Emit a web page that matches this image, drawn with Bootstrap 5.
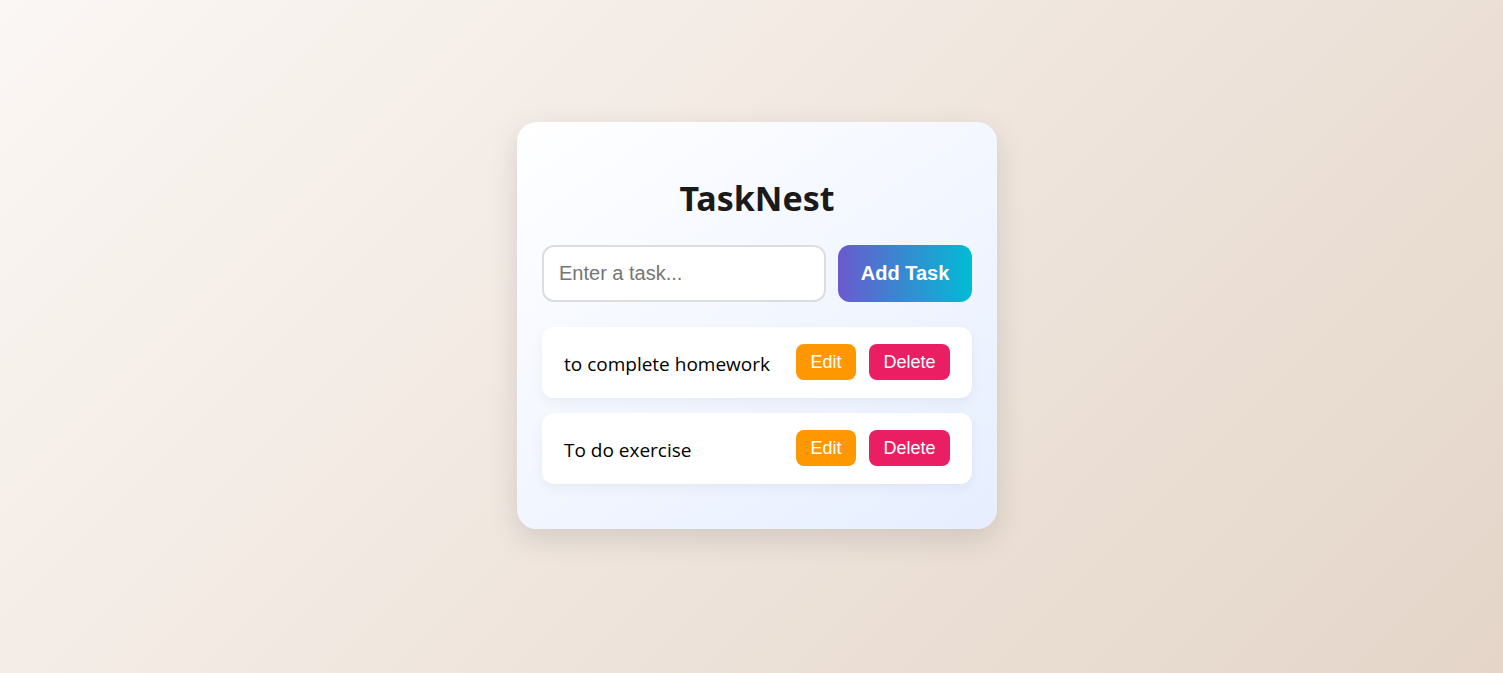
<!DOCTYPE html>
<html lang="en">
<head>
<meta charset="utf-8">
<meta name="viewport" content="width=device-width, initial-scale=1">
<title>TaskNest</title>
<link href="https://cdn.jsdelivr.net/npm/bootstrap@5.3.0/dist/css/bootstrap.min.css" rel="stylesheet">
<style>
  body {
    font-family: "Segoe UI", "Open Sans", "Noto Sans", sans-serif;
    color: #000;
    background: linear-gradient(135deg, #fbf7f4, #e4d5c8) no-repeat;
    padding: 0 0 22px 11px;
  }
  .task-panel {
    max-width: 480px;
    padding: 51px 25px 45px;
    border: 0;
    border-radius: 20px;
    background: linear-gradient(145deg, #fff, #e6eeff);
    box-shadow: 0 10px 30px rgba(0, 0, 0, .12);
  }
  .panel-title {
    margin: 0 0 22px;
    font-family: "Segoe UI", "Noto Sans", sans-serif;
    font-size: 34px;
    line-height: 50px;
    font-weight: 700;
    color: #1a1a1a;
  }
  .add-form { gap: 12px; margin-bottom: 25px; }
  .task-input, .add-btn, .item-btn { font-family: "Liberation Sans", Arial, sans-serif; }
  .task-input {
    min-width: 0;
    height: 57px;
    padding: 0 15px;
    font-size: 20px;
    border: 2px solid #ddd;
    border-radius: 12px;
  }
  .task-input::placeholder { color: #757575; }
  .add-btn {
    width: 134px;
    padding: 0 0 2px;
    font-size: 20px;
    font-weight: 700;
    border: 0;
    border-radius: 12px;
    background: linear-gradient(90deg, #6a5acd, #00bcd4);
  }
  .task-list { gap: 15px; }
  .task-item {
    min-height: 71px;
    padding: 16px 22px 17px;
    gap: 13px;
    border-radius: 12px;
    background: #fff;
    box-shadow: 0 4px 12px rgba(0, 0, 0, .05);
  }
  .task-text { font-size: 19px; line-height: 28px; padding-top: 4px; }
  .item-btn {
    height: 36px;
    padding: 0;
    font-size: 18px;
    line-height: 20px;
    border: 0;
    border-radius: 8px;
  }
  .edit-btn { width: 60px; }
  .delete-btn { width: 81px; }
  .edit-btn, .edit-btn:hover { background: #ff9800; }
  .delete-btn, .delete-btn:hover { background: #e91e63; }
</style>
</head>
<body class="min-vh-100 d-flex justify-content-center align-items-center">
  <main class="task-panel card w-100">
    <h1 class="panel-title text-center">TaskNest</h1>
    <form class="add-form d-flex" onsubmit="return false">
      <input type="text" class="task-input form-control flex-fill" placeholder="Enter a task..." aria-label="Enter a task">
      <button type="submit" class="add-btn btn text-white text-nowrap flex-shrink-0">Add Task</button>
    </form>
    <ul class="task-list list-unstyled d-flex flex-column mb-0">
      <li class="task-item d-flex align-items-center">
        <span class="task-text me-auto">to complete homework</span>
        <button type="button" class="item-btn edit-btn btn text-white">Edit</button>
        <button type="button" class="item-btn delete-btn btn text-white">Delete</button>
      </li>
      <li class="task-item d-flex align-items-center">
        <span class="task-text me-auto">To do exercise</span>
        <button type="button" class="item-btn edit-btn btn text-white">Edit</button>
        <button type="button" class="item-btn delete-btn btn text-white">Delete</button>
      </li>
    </ul>
  </main>
<script src="https://cdn.jsdelivr.net/npm/bootstrap@5.3.0/dist/js/bootstrap.bundle.min.js"></script>
</body>
</html>
